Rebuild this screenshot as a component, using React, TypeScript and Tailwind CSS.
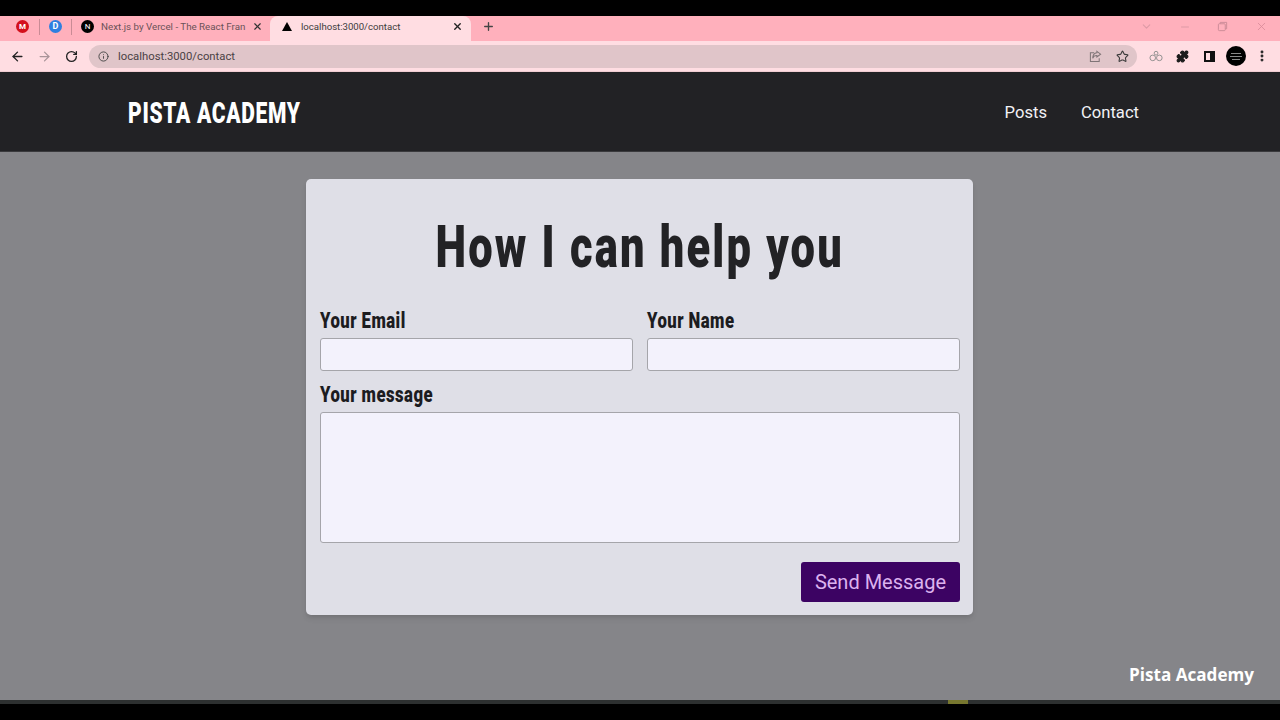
import { ArrowLeft, ArrowRight, RotateCw, Info, Star, Puzzle, X, Plus, ChevronDown, Minus, EllipsisVertical } from "lucide-react";

const labelText = "inline-block origin-left scale-x-[0.76] tracking-[0.6px] whitespace-nowrap font-['Roboto',sans-serif] text-[22px] leading-[28px] font-black text-[#1c1c1f]";

function BrowserChrome() {
  return (
    <div className="flex-none font-['Roboto',sans-serif]">
      <div className="h-4 bg-black" />
      {/* Tab strip */}
      <div className="h-[25px] pb-[4px] bg-[#ffb0bc] flex items-center">
        <div className="w-[16px]" />
        <div className="w-[13px] h-[13px] rounded-full bg-[#d3101c] text-white text-[8px] font-bold flex items-center justify-center">M</div>
        <div className="w-px h-4 bg-[#c98b95] ml-[10px]" />
        <div className="w-[13px] h-[13px] rounded-full bg-[#2f7fe0] text-white text-[9px] font-bold flex items-center justify-center ml-[9px]">D</div>
        <div className="w-px h-4 bg-[#c98b95] ml-[9px]" />
        <div className="w-[13px] h-[13px] rounded-full bg-black text-white text-[8px] flex items-center justify-center ml-[9px]">N</div>
        <span className="w-[147px] ml-[7px] pt-px text-[9.75px] text-[#6a5257] whitespace-nowrap">Next.js by Vercel - The React Fran</span>
        <X className="w-[11px] h-[11px] ml-[4px] text-[#333]" strokeWidth={2.5} />
        <div className="self-stretch -mb-[4px] pb-[4px] w-[201px] ml-[7px] bg-[#ffdde2] rounded-t-lg flex items-center">
          <div className="ml-[12px] w-0 h-0 border-l-[5px] border-r-[5px] border-b-[9px] border-l-transparent border-r-transparent border-b-black" />
          <span className="ml-[9px] pt-px text-[9.6px] text-[#3c3c3c]">localhost:3000/contact</span>
          <X className="w-[11px] h-[11px] ml-auto mr-[8px] text-[#222]" strokeWidth={3} />
        </div>
        <Plus className="w-[13px] h-[13px] ml-[11px] text-[#444]" strokeWidth={2.5} />
        <ChevronDown className="w-[13px] h-[13px] ml-[645px] text-[#dd9aa6]" />
        <Minus className="w-[12px] h-[12px] ml-[26px] text-[#dd9aa6]" />
        <svg viewBox="0 0 12 12" className="w-[11px] h-[11px] ml-[26px] text-[#c98a96]" fill="none" stroke="currentColor">
          <rect x="1.5" y="3" width="7.5" height="7.5" rx="1" />
          <path d="M3.5 3V1.5h7v7H9" />
        </svg>
        <X className="w-[13px] h-[13px] ml-[27px] text-[#d98b99]" strokeWidth={1.5} />
      </div>
      {/* Toolbar */}
      <div className="h-[30px] bg-[#ffdde2] flex items-center border-b border-[#f0ccd2] box-content">
        <ArrowLeft className="w-[15px] h-[15px] ml-[10px] text-[#222]" strokeWidth={2.2} />
        <ArrowRight className="w-[15px] h-[15px] ml-[12px] text-[#a99499]" strokeWidth={2} />
        <RotateCw className="w-[13px] h-[13px] ml-[13px] text-[#222]" strokeWidth={2.4} />
        <div className="ml-[11px] w-[1048px] h-[23px] rounded-full bg-[#e0c5c9] flex items-center">
          <Info className="w-[11px] h-[11px] ml-[9px] text-[#444]" />
          <span className="ml-[9px] pt-[2px] text-[11.3px] text-[#4a4144]">localhost:3000/contact</span>
          <svg viewBox="0 0 14 14" className="w-[13px] h-[13px] ml-auto text-[#7f7477]" fill="none" stroke="currentColor" strokeWidth="1.1">
            <path d="M5.5 3H1.5v9.5h9.5V9" />
            <path d="M8.5 1.5 12.5 4.5 8.5 7.5V6C6 6 4.5 7 4 9 4 5.5 6 3.3 8.5 3Z" />
          </svg>
          <Star className="w-[13px] h-[13px] ml-[14px] mr-[8px] text-[#3a3a3a]" />
        </div>
        <svg viewBox="0 0 16 12" className="w-[15px] h-[12px] ml-[12px] text-[#8d8d8d]" fill="none" stroke="currentColor">
          <circle cx="4" cy="8" r="3" />
          <circle cx="11" cy="8" r="3" />
          <circle cx="7.5" cy="3" r="2" />
        </svg>
        <Puzzle className="w-[13px] h-[13px] ml-[12px] text-[#1c1c1c] fill-[#1c1c1c]" />
        <div className="w-[11px] h-[11px] ml-[15px] border-2 border-[#111] border-r-[5px]" />
        <div className="w-[20px] h-[20px] ml-[11px] rounded-full bg-black flex flex-col items-center justify-center gap-[2px]">
          <div className="w-[10px] h-px bg-[#888]" />
          <div className="w-[12px] h-px bg-[#888]" />
          <div className="w-[8px] h-px bg-[#888]" />
        </div>
        <EllipsisVertical className="w-[14px] h-[14px] ml-[9px] text-[#222]" strokeWidth={3} />
      </div>
    </div>
  );
}

export default function App() {
  return (
    <div className="w-[1280px] h-[720px] overflow-hidden flex flex-col bg-black">
      <BrowserChrome />
      <header className="h-[80px] flex-none bg-[#222225] border-b border-[#3a3a3d] box-border flex items-center justify-between pl-[128px] pr-[141px]">
        <span className="inline-block pt-[1px] origin-left scale-x-[0.7] tracking-[1px] whitespace-nowrap font-['Roboto',sans-serif] text-[30px] font-black text-white">PISTA ACADEMY</span>
        <nav className="flex gap-[34px] pt-[4px] font-['Roboto',sans-serif] text-[16.6px] text-[#f2f2f5]">
          <span>Posts</span>
          <span>Contact</span>
        </nav>
      </header>
      <main className="relative h-[548px] flex-none bg-[#858589] flex justify-center pt-[27px]">
        <div className="w-[667px] h-[436px] ml-[-1px] bg-[#dfdfe7] rounded-[5px] shadow-md pl-[14px] pr-[13px]">
          <h1 className="text-center pt-[33px] font-['Roboto',sans-serif] text-[60px] leading-[70px] font-black text-[#222225]">
            <span className="inline-block scale-x-[0.725] tracking-[3px] whitespace-nowrap">How I can help you</span>
          </h1>
          <div className="grid grid-cols-2 gap-x-[14px] mt-[25px]">
            <label className="block">
              <span className={labelText}>Your Email</span>
              <input className="mt-[3px] block w-full h-[33px] bg-[#f3f2fc] border border-[#a5a5aa] rounded-[3px]" />
            </label>
            <label className="block">
              <span className={labelText}>Your Name</span>
              <input className="mt-[3px] block w-full h-[33px] bg-[#f3f2fc] border border-[#a5a5aa] rounded-[3px]" />
            </label>
          </div>
          <label className="block mt-[10px]">
            <span className={labelText}>Your message</span>
            <textarea className="mt-[3px] block w-full h-[131px] bg-[#f3f2fc] border border-[#a5a5aa] rounded-[3px] resize-none" />
          </label>
          <div className="flex justify-end mt-[19px]">
            <button className="w-[159px] h-[40px] bg-[#3c0363] text-[#dcb2ef] rounded-[3px] font-['Roboto',sans-serif] text-[20px]">Send Message</button>
          </div>
        </div>
        <span className="absolute right-[26px] bottom-[12px] font-['Open_Sans',sans-serif] font-bold text-[17.1px] text-white">Pista Academy</span>
      </main>
      <div className="relative h-[4px] flex-none bg-[#2d3030]">
        <div className="absolute left-[948px] w-[20px] h-full bg-[#77772f]" />
      </div>
      <div className="flex-1 bg-black" />
    </div>
  );
}
